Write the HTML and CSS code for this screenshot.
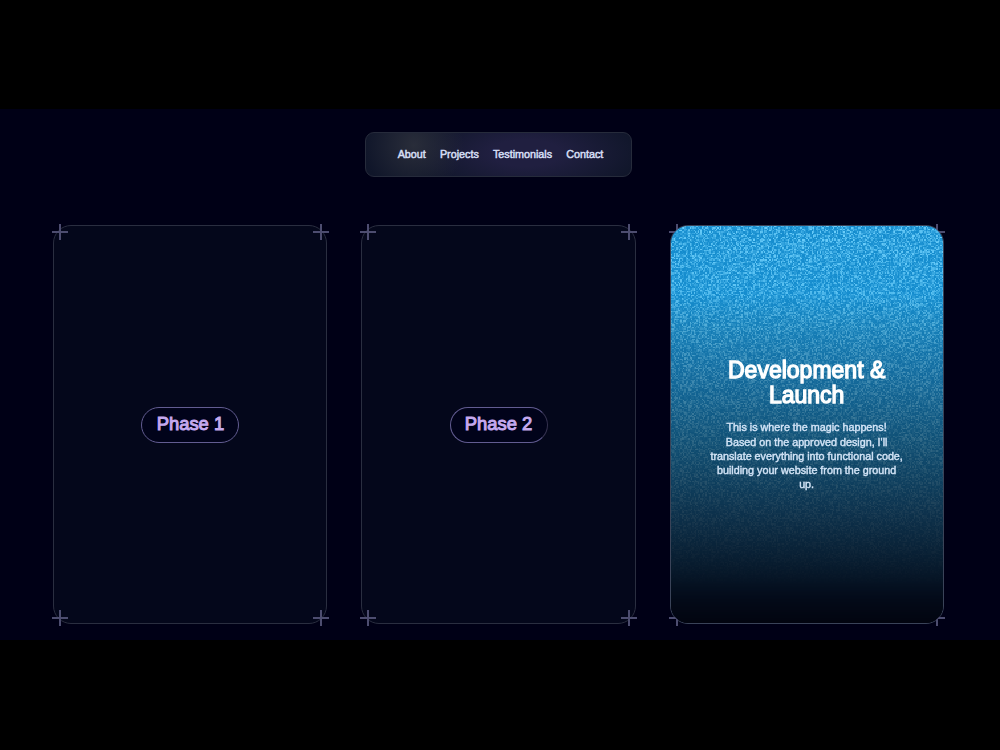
FILE: index.html
```html
<!DOCTYPE html>
<html lang="en">
<head>
    <meta charset="UTF-8">
    <meta name="viewport" content="width=device-width, initial-scale=1.0">
    <title>My Approach</title>
    <link rel="stylesheet" href="styles.css">
</head>
<body>

    <main class="page">
        <nav class="navbar">
            <a href="#about">About</a>
            <a href="#projects">Projects</a>
            <a href="#testimonials">Testimonials</a>
            <a href="#contact">Contact</a>
        </nav>

        <section class="cards">
            <div class="card">
                <span class="plus top left"></span>
                <span class="plus top right"></span>
                <span class="plus bottom left"></span>
                <span class="plus bottom right"></span>
                <div class="phase">Phase 1</div>
            </div>

            <div class="card">
                <span class="plus top left"></span>
                <span class="plus top right"></span>
                <span class="plus bottom left"></span>
                <span class="plus bottom right"></span>
                <div class="phase phase-fade">Phase 2</div>
            </div>

            <div class="card active">
                <span class="plus top left"></span>
                <span class="plus top right"></span>
                <span class="plus bottom left"></span>
                <span class="plus bottom right"></span>
                <canvas id="reveal" class="reveal" width="205" height="299"></canvas>
                <div class="card-text">
                    <h2>Development &amp; Launch</h2>
                    <p>This is where the magic happens!<br>Based on the approved design, I'll translate everything into functional code, building your website from the ground up.</p>
                </div>
            </div>
        </section>
    </main>

    <script src="script.js"></script>
</body>
</html>
```
FILE: styles.css
```css
body {
    margin: 0;
    height: 750px;
    overflow: hidden;
    background-color: #000;
    font-family: "Liberation Sans", Arial, sans-serif;
}
.page {
    box-sizing: border-box;
    height: 531px;
    margin-top: 109px;
    padding-top: 23px;
    background-color: #000016;
}
.navbar {
    box-sizing: border-box;
    display: flex;
    justify-content: center;
    align-items: center;
    gap: 14.2px;
    width: 267px;
    height: 45px;
    margin-left: 365px;
    padding: 0 0 2px 4px;
    border: 1px solid #262b3b;
    border-radius: 9px;
    background: radial-gradient(ellipse 50px 50px at 48px 12px, #292d3a, transparent),
                radial-gradient(ellipse 115px 45px at 160px 20px, #201f40 30%, transparent),
                #10162a;
}
.navbar a {
    color: #d5def4;
    font-size: 10.75px;
    text-decoration: none;
    -webkit-text-stroke: 0.5px #d5def4;
}
.cards {
    display: flex;
    gap: 34px;
    margin: 48px 0 0 53.4px;
}
.card {
    position: relative;
    box-sizing: border-box;
    display: flex;
    flex: none;
    justify-content: center;
    align-items: center;
    width: 274.1px;
    height: 399px;
    border: 1px solid #2a2e40;
    border-radius: 18px;
    background-color: #04071b;
}
.plus {
    position: absolute;
    width: 16px;
    height: 16px;
    background: linear-gradient(#4d4d70, #4d4d70) center / 16px 2px no-repeat,
                linear-gradient(#4d4d70, #4d4d70) center / 2px 16px no-repeat;
}
.top {
    top: -2px;
}
.bottom {
    bottom: -3px;
}
.left {
    left: -2px;
}
.right {
    right: -2.5px;
}
.phase {
    box-sizing: border-box;
    width: 98px;
    height: 36px;
    border: 1px solid #625c91;
    border-radius: 18px;
    background-color: #01031a;
    color: #c4a9ee;
    font-size: 18.4px;
    line-height: 32px;
    text-align: center;
    -webkit-text-stroke: 1px #c4a9ee;
}
.phase-fade {
    border-right-color: #35324f;
}
.active {
    border-color: #3a4358;
}
.reveal {
    position: absolute;
    top: 0;
    left: 0;
    width: 100%;
    height: 100%;
    border-radius: 17px;
    image-rendering: pixelated;
}
.card-text {
    position: relative;
    width: 194px;
    padding-top: 1px;
    color: #fff;
    text-align: center;
}
.card-text h2 {
    margin: 0;
    font-size: 23px;
    font-weight: normal;
    line-height: 25px;
    -webkit-text-stroke: 1.3px #fff;
}
.card-text p {
    margin: 12px 0 0;
    color: #d3e4f7;
    font-size: 10.75px;
    line-height: 14.3px;
    -webkit-text-stroke: 0.4px #d3e4f7;
}
```
FILE: script.js
```js
const canvas = document.getElementById("reveal");
const ctx = canvas.getContext("2d");

// Colour stops from the top of the card to the bottom
const stops = [
    [0, [20, 140, 206]],
    [0.17, [20, 140, 206]],
    [0.25, [20, 126, 184]],
    [0.36, [18, 108, 160]],
    [0.55, [15, 78, 115]],
    [0.72, [12, 49, 76]],
    [0.85, [7, 27, 46]],
    [0.94, [3, 10, 24]],
    [1, [2, 4, 15]]
];

function colorAt(t) {
    let i = 1;
    while (i < stops.length - 1 && t > stops[i][0]) i++;
    const [t0, a] = stops[i - 1];
    const [t1, b] = stops[i];
    const k = (t - t0) / (t1 - t0);
    return a.map((v, n) => v + (b[n] - v) * k);
}

let seed = 7;
function random() {
    seed = (seed * 1664525 + 1013904223) % 4294967296;
    return seed / 4294967296;
}

for (let y = 0; y < canvas.height; y++) {
    const t = y / canvas.height;
    const base = colorAt(t);
    const strength = Math.max(0, 1 - t * 1.1);
    for (let x = 0; x < canvas.width; x++) {
        // Most dots are faint, a few are bright
        const dot = Math.pow(random(), 2) * strength;
        const r = base[0] + 90 * dot;
        const g = base[1] + 68 * dot;
        const b = base[2] + 46 * dot;
        ctx.fillStyle = `rgb(${r}, ${g}, ${b})`;
        ctx.fillRect(x, y, 1, 1);
    }
}
```
